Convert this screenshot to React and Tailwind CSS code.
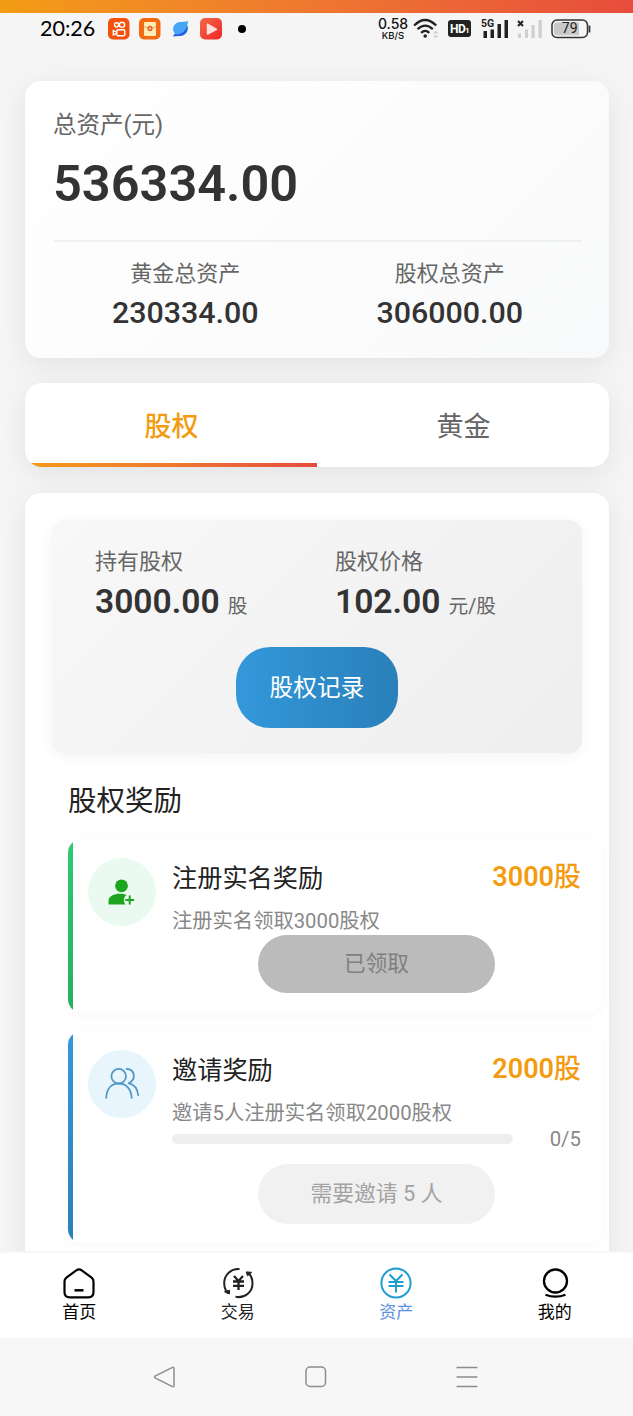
import React from "react";

function StatusBar() {
  return (
    <div className="flex h-[31px] items-center pl-[40px] pr-[42px] text-black">
      <span className="w-[68px] font-['Lato'] text-[21.500px] leading-[31px]">20:26</span>
      <div className="flex items-center">
        <svg className="h-[22px] w-[22px]" viewBox="0 0 22 22">
          <rect width="21.5" height="21.5" rx="5" fill="#f4510c" />
          <g fill="none" stroke="#fff" strokeWidth="1.4">
            <circle cx="8.6" cy="6.8" r="2.1" />
            <circle cx="14" cy="6.8" r="2.6" />
            <rect x="8.8" y="11.7" width="8" height="6" rx="1.2" />
            <path d="M8.6 14.2 5.3 12.6v4.4l3.3-1.5" />
          </g>
        </svg>
        <svg className="ml-[9px] h-[22px] w-[22px]" viewBox="0 0 22 22">
          <rect width="21.5" height="21.5" rx="5" fill="#f26a11" />
          <rect x="5" y="4" width="12" height="14" rx="1" fill="#ffedb5" />
          <path d="M5 8.5 11 11l6-2.500" fill="none" stroke="#eda447" strokeWidth="1" />
          <circle cx="11" cy="10.400" r="2.600" fill="#e7622b" />
          <path d="M11 9v3M9.800 10.400h2.400" stroke="#ffedb5" strokeWidth=".7" />
        </svg>
        <svg className="ml-[9px] h-[22px] w-[22px]" viewBox="0 0 22 22">
          <path d="M3 11C3.500 6 7.500 3.400 12 4L18.300 3.300 17.200 7C19 13 15 18.300 9.500 18L3 18.300 4.800 15.500Q3 13.500 3 11Z" fill="#47a5f5" />
          <path d="M17.400 7.500C19 13 15 18.300 9.500 18L3 18.300 4.400 16.200C10 17.500 15.500 14 17.400 7.500Z" fill="#255ee8" />
        </svg>
        <svg className="ml-[8px] h-[22px] w-[22px]" viewBox="0 0 22 22">
          <defs><linearGradient id="play" x2="1" y2="1"><stop stopColor="#f46848" /><stop offset="1" stopColor="#ee2826" /></linearGradient></defs>
          <rect width="22" height="21.500" rx="5" fill="url(#play)" />
          <path d="M7.500 6.200v9.800L16.500 11.300Z" fill="#ffe0db" stroke="#ffe0db" strokeWidth="1.500" strokeLinejoin="round" />
        </svg>
        <span className="ml-[16px] h-2 w-2 rounded-full bg-black" />
      </div>
      <div className="ml-auto flex items-center">
        <div className="flex w-[30px] flex-col items-center font-['Inter'] font-medium text-[#111]">
          <span className="text-[14px] leading-[13px]">0.58</span>
          <span className="text-[9.500px] leading-[11px]">KB/S</span>
        </div>
        <svg className="ml-[5px] h-[22px] w-[27px]" viewBox="0 0 27 22">
          <g fill="none" stroke="#222" strokeWidth="2.300">
            <path d="M1.200 7.500Q12 -3.500 23.200 7.500" /><path d="M4.600 11.200Q12.200 4 19.800 11.200" /><path d="M8.100 14.800Q12.200 10.900 16.300 14.800" />
          </g>
          <circle cx="12.200" cy="18" r="1.800" fill="#222" />
          <path d="M20 15.500 22.800 12.500 25.600 15.500ZM20 17.500 22.800 20.500 25.600 17.500Z" fill="#d0d0d0" />
        </svg>
        <span className="ml-[8px] flex h-[17px] w-[23px] items-center justify-center rounded-[3px] bg-[#222] pt-px font-['Roboto'] text-[12px] leading-[16px] font-bold tracking-[-0.500px] text-white">HD<small className="mt-1 text-[7.500px]">1</small></span>
        <svg className="ml-[10px] h-[22px] w-[28px]" viewBox="0 0 28 22">
          <text x="0" y="9" fontFamily="Roboto" fontSize="10.500" fontWeight="700" fill="#222">5G</text>
          <path d="M2.500 13h3.500v7H2.500zM9.500 11.500H13V20H9.500zM16.500 6H20v14h-3.500zM23.500 2H27v18h-3.500z" fill="#222" />
        </svg>
        <svg className="ml-[8px] h-[22px] w-[26px]" viewBox="0 0 26 22">
          <path d="m1 3 5 5m0-5L1 8" stroke="#222" strokeWidth="2" />
          <path d="M1 15.500h3V20H1zM8 11.500h3V20H8zM14.500 7h3.200v13h-3.200zM21.500 2h3.300v18h-3.300z" fill="#cfcfcf" />
        </svg>
        <svg className="ml-[8px] h-[20px] w-[40px]" viewBox="0 0 40 20">
          <rect x="1" y="1" width="35.500" height="17.500" rx="5" fill="none" stroke="#333" strokeWidth="1.500" />
          <path d="M6 3.200h22v13H6a3 3 0 0 1-3-3v-7a3 3 0 0 1 3-3Z" fill="#c9c9c9" />
          <path d="M38.500 6.500v7" stroke="#333" strokeWidth="1.700" />
          <text x="18.700" y="14.300" textAnchor="middle" fontFamily="Roboto" fontSize="14" fill="#222">79</text>
        </svg>
      </div>
    </div>
  );
}

function AssetSummary() {
  return (
    <section className="h-[277px] rounded-[16px] bg-linear-135 from-white to-[#f8f9fa] pt-[28px] pr-[27px] pl-[28px] shadow-[0_7px_28px_rgba(0,0,0,0.08)]">
      <div className="text-[23.500px] leading-[32px] text-[#666]">总资产(元)</div>
      <div className="mt-[11px] text-[50.500px] leading-[64px] font-semibold text-[#333]">536334.00</div>
      <div className="mt-[24px] grid grid-cols-2 border-t-2 border-[#eef0f1] pt-[17px] text-center">
        <div>
          <div className="text-[22px] leading-[30px] text-[#666]">黄金总资产</div>
          <div className="mt-[5px] text-[30.400px] leading-[38px] font-medium text-[#333]">230334.00</div>
        </div>
        <div>
          <div className="text-[22px] leading-[30px] text-[#666]">股权总资产</div>
          <div className="mt-[5px] text-[30.400px] leading-[38px] font-medium text-[#333]">306000.00</div>
        </div>
      </div>
    </section>
  );
}

function AssetTabs() {
  return (
    <div className="mt-[25px] grid h-[84px] grid-cols-2 overflow-clip rounded-[17px] bg-white text-center text-[27px] shadow-[0_7px_28px_rgba(0,0,0,0.08)]">
      <div className="flex flex-col justify-between">
        <span className="pt-[24px] pl-px leading-[40px] font-medium text-[#f39c12]">股权</span>
        <span className="h-[4px] bg-linear-to-r from-[#f39c12] to-[#e74c3c]" />
      </div>
      <span className="pt-[24px] pl-px leading-[40px] text-[#666]">黄金</span>
    </div>
  );
}

function Holding({ label, value, unit }) {
  return (
    <div className="w-[240px]">
      <div className="text-[22px] leading-[30px] text-[#666]">{label}</div>
      <div className="mt-[3px] flex items-baseline leading-[44px] text-[#666]">
        <span className="text-[33.600px] font-semibold text-[#333]">{value}</span>
        <span className="ml-[8px] text-[19.700px]">{unit}</span>
      </div>
    </div>
  );
}

function Holdings() {
  return (
    <div className="ml-[27px] h-[233px] w-[530px] rounded-[13px] bg-linear-135 from-[#f8f8f8] to-[#eeeeee] pt-[27px] shadow-[0_3px_14px_rgba(0,0,0,0.05)]">
      <div className="flex h-[76px] pl-[43px]">
        <Holding label="持有股权" value="3000.00" unit="股" />
        <Holding label="股权价格" value="102.00" unit="元/股" />
      </div>
      <button className="mt-[24px] ml-[184px] flex h-[81px] w-[162px] items-center justify-center rounded-[34px] bg-linear-to-r from-[#3498db] to-[#2980b9] pt-[3px] text-[23.700px] text-white">股权记录</button>
    </div>
  );
}

function RewardCard({ className, barClass, iconClass, icon, title, amount, desc, children }) {
  return (
    <article className={`flex overflow-clip rounded-[14px] bg-white shadow-[0_2px_14px_rgba(0,0,0,0.035)] ${className}`}>
      <div className={`w-[5px] shrink-0 ${barClass}`} />
      <div className={`mt-[19px] ml-[15px] flex h-[68px] w-[68px] shrink-0 items-center justify-center rounded-full ${iconClass}`}>{icon}</div>
      <div className="ml-[16px] w-[409px] pt-[21px]">
        <div className="flex h-[38px] justify-between leading-[38px]">
          <span className="text-[25.200px] text-[#222]">{title}</span>
          <span className="-mt-[2px] text-[27px] font-medium text-[#f39c12]"><b className="font-semibold">{amount}</b>股</span>
        </div>
        <div className="mt-[9px] h-[27px] text-[20.300px] leading-[28px] text-[#888]">{desc}</div>
        {children}
      </div>
    </article>
  );
}

function Rewards() {
  return (
    <div className="ml-[43px] w-[534px]">
      <h2 className="mt-[29px] text-[28.500px] leading-[40px] text-[#222]">股权奖励</h2>
      <RewardCard
        className="mt-[17px] h-[174px]"
        barClass="bg-linear-to-b from-[#2ecc71] to-[#27ae60]"
        iconClass="bg-[#eafaf0]"
        icon={
          <svg className="h-[30px] w-[30px]" viewBox="0 0 30 30" fill="#1da61d">
            <circle cx="14.500" cy="8.800" r="6.400" />
            <path d="M1.500 27.500v-3.800C1.500 19 8 16.500 13 16.700c3 0 5 .3 6.500 1.300-3.400 2.500-3.200 6.800-1 9.500Z" />
            <path d="M22.700 19.300v7.400M19 23h7.400" stroke="#1da61d" strokeWidth="2" strokeLinecap="round" />
          </svg>
        }
        title="注册实名奖励"
        amount="3000"
        desc="注册实名领取3000股权"
      >
        <button className="mt-[1px] ml-[86px] flex h-[58px] w-[237px] items-center justify-center rounded-full bg-[#bbb] text-[21.600px] text-[#808080]">已领取</button>
      </RewardCard>
      <RewardCard
        className="mt-[18px] h-[212px]"
        barClass="bg-linear-to-b from-[#3498db] to-[#2980b9]"
        iconClass="bg-[#e9f5fc]"
        icon={
          <svg className="h-[36px] w-[36px]" viewBox="0 0 36 36" fill="none" stroke="#5199c4" strokeWidth="1.800" strokeLinecap="round">
            <circle cx="14.700" cy="10.200" r="7.300" />
            <path d="M2.200 31.800c.5-9.500 5.500-14.300 12.500-14.300s12.500 4.800 13 14.300M22.700 3c8.500.2 9.700 10.700 2 14.200M24.700 17.200c5.500 1.500 9 6 9.500 12" />
          </svg>
        }
        title="邀请奖励"
        amount="2000"
        desc="邀请5人注册实名领取2000股权"
      >
        <div className="flex items-center justify-between">
          <div className="h-[10px] w-[341px] rounded-full bg-[#eee]" />
          <span className="text-[20.400px] leading-[26px] text-[#888]">0/5</span>
        </div>
        <button className="mt-[12px] ml-[86px] flex h-[60px] w-[237px] items-center justify-center rounded-full bg-[#f1f1f1] text-[21.800px] text-[#a3a3a3]">需要邀请 5 人</button>
      </RewardCard>
    </div>
  );
}

function NavItem({ label, className, labelClass = "", children }) {
  return (
    <div className={`flex w-[159px] flex-col items-center pt-[14px] ${className}`}>
      <svg className="h-[34px] w-[34px]" viewBox="0 0 34 34" fill="none" stroke="currentColor" strokeWidth="2">{children}</svg>
      <span className={`text-[17px] leading-[22px] ${labelClass}`}>{label}</span>
    </div>
  );
}

function BottomNav() {
  return (
    <nav className="flex h-[87px] shrink-0 border-t-2 border-[#f7f7f7] bg-white">
      <NavItem label="首页" className="text-black">
        <path d="M14.300 3.400Q17 1.300 19.700 3.400L29.300 10.300Q31.500 12 31.500 14.500V25Q31.500 30.300 26.300 30.300H7.700Q2.500 30.300 2.500 25V14.500Q2.500 12 4.700 10.300Z" strokeWidth="2.200" />
        <path d="M12.500 23.300h9" strokeWidth="2.500" />
      </NavItem>
      <NavItem label="交易" className="text-[#222]">
        <path d="M18.500 2C10 1.300 3.200 8 3.200 16q0 6.500 3.800 10.200M14.500 29.800C24 31.600 31.500 25 31.500 16.500q0-6-3.500-10" />
        <path d="m8.500 27-5-2.300 5-1.500ZM25.200 4.900l5.500.4-4.200 3.500Z" fill="currentColor" strokeWidth="1" />
        <path d="m13 9 4.500 5L22 9M17.500 14v9M12 14.500h11M12 18.800h11" strokeWidth="2.300" />
      </NavItem>
      <NavItem label="资产" className="text-[#219cd1]" labelClass="text-[#5c8fdd]">
        <circle cx="17" cy="16" r="14.600" />
        <path d="m10.500 7.500 6.500 6.500 6.500-6.500M17 14v11.500M9.500 15h15M9.500 19h15" />
      </NavItem>
      <NavItem label="我的" className="-mr-px text-black">
        <circle cx="17.500" cy="14" r="11.500" strokeWidth="2.300" />
        <path d="M7.500 27.700q10 4 20 0" strokeWidth="2.300" />
      </NavItem>
    </nav>
  );
}

function SystemNav() {
  return (
    <div className="flex h-[78px] shrink-0 items-center bg-[#f7f7f7] pl-[152px] text-[#8d8d8d]">
      <svg className="h-[24px] w-[24px]" viewBox="0 0 24 24" fill="none" stroke="currentColor" strokeWidth="1.500"><path d="M20 2.700Q22 1.700 22 3.700v16.600Q22 22.300 20 21.300L3.500 13.200Q1.500 12 3.500 10.800Z" /></svg>
      <svg className="ml-[128px] h-[24px] w-[24px]" viewBox="0 0 24 24" fill="none" stroke="currentColor" strokeWidth="1.500"><rect x="2" y="2" width="19.500" height="19.500" rx="4" /></svg>
      <svg className="ml-[127px] h-[24px] w-[24px]" viewBox="0 0 24 24" fill="none" stroke="currentColor" strokeWidth="1.700"><path d="M1.500 2.500h21M1.500 12h21M1.500 21.500h21" /></svg>
    </div>
  );
}

export default function App() {
  return (
    <div className="flex h-[1416px] w-[633px] flex-col overflow-clip bg-[#f5f5f5] font-['Roboto','Noto_Sans_CJK_SC',sans-serif]">
      <div className="h-[13px] shrink-0 bg-linear-to-r from-[#f39c12] to-[#e74c3c]" />
      <StatusBar />
      <main className="min-h-0 flex-1 overflow-clip pt-[37px] pr-[24px] pl-[25px]">
        <AssetSummary />
        <AssetTabs />
        <section className="mt-[26px] h-[900px] rounded-[16px] bg-white pt-[27px] shadow-[0_7px_28px_rgba(0,0,0,0.08)]">
          <Holdings />
          <Rewards />
        </section>
      </main>
      <BottomNav />
      <SystemNav />
    </div>
  );
}
